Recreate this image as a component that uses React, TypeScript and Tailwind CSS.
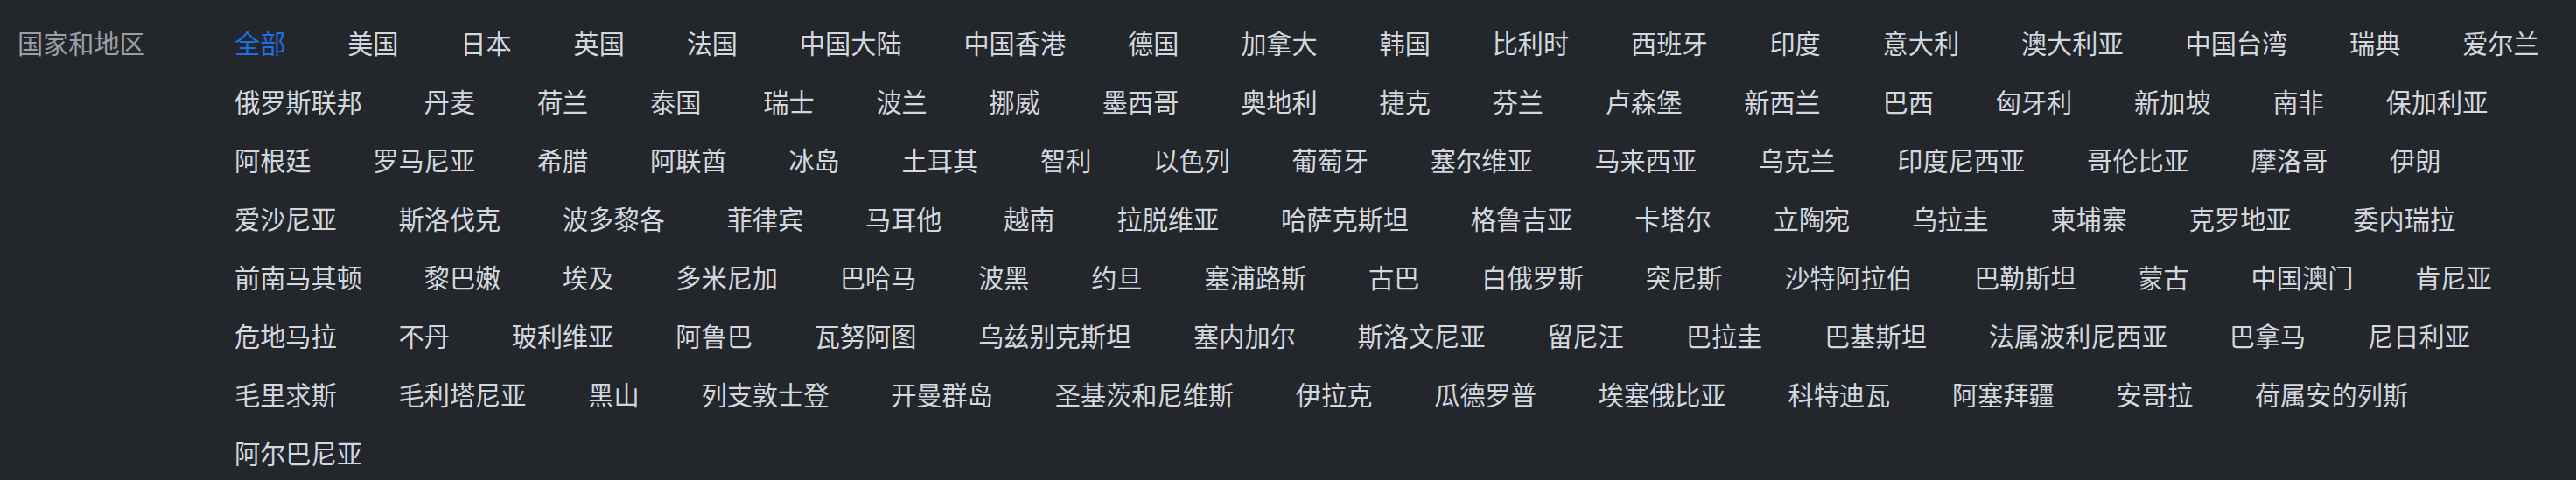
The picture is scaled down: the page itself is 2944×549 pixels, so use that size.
import React from "react";

const regions = [
  "全部", "美国", "日本", "英国", "法国", "中国大陆", "中国香港", "德国", "加拿大", "韩国", "比利时", "西班牙", "印度", "意大利", "澳大利亚", "中国台湾", "瑞典", "爱尔兰",
  "俄罗斯联邦", "丹麦", "荷兰", "泰国", "瑞士", "波兰", "挪威", "墨西哥", "奥地利", "捷克", "芬兰", "卢森堡", "新西兰", "巴西", "匈牙利", "新加坡", "南非", "保加利亚",
  "阿根廷", "罗马尼亚", "希腊", "阿联酋", "冰岛", "土耳其", "智利", "以色列", "葡萄牙", "塞尔维亚", "马来西亚", "乌克兰", "印度尼西亚", "哥伦比亚", "摩洛哥", "伊朗",
  "爱沙尼亚", "斯洛伐克", "波多黎各", "菲律宾", "马耳他", "越南", "拉脱维亚", "哈萨克斯坦", "格鲁吉亚", "卡塔尔", "立陶宛", "乌拉圭", "柬埔寨", "克罗地亚", "委内瑞拉",
  "前南马其顿", "黎巴嫩", "埃及", "多米尼加", "巴哈马", "波黑", "约旦", "塞浦路斯", "古巴", "白俄罗斯", "突尼斯", "沙特阿拉伯", "巴勒斯坦", "蒙古", "中国澳门", "肯尼亚",
  "危地马拉", "不丹", "玻利维亚", "阿鲁巴", "瓦努阿图", "乌兹别克斯坦", "塞内加尔", "斯洛文尼亚", "留尼汪", "巴拉圭", "巴基斯坦", "法属波利尼西亚", "巴拿马", "尼日利亚",
  "毛里求斯", "毛利塔尼亚", "黑山", "列支敦士登", "开曼群岛", "圣基茨和尼维斯", "伊拉克", "瓜德罗普", "埃塞俄比亚", "科特迪瓦", "阿塞拜疆", "安哥拉", "荷属安的列斯",
  "阿尔巴尼亚",
];

export default function App() {
  const [active, setActive] = React.useState("全部");
  return (
    <div
      className="min-h-[549px] w-full bg-[#23262b] pt-[15px]"
      style={{ fontFamily: '"Noto Sans CJK SC", "Noto Sans", sans-serif' }}
    >
      <div className="flex items-start">
        <div className="w-[268px] shrink-0 pl-[20px] text-[29.2px] leading-[67px] text-[#9a9ea6]">
          国家和地区
        </div>
        <ul className="flex flex-1 flex-wrap gap-x-[70.8px] pr-[20px]">
          {regions.map((name) => (
            <li key={name}>
              <button
                type="button"
                onClick={() => setActive(name)}
                className={
                  name === active
                    ? "cursor-pointer text-[29.2px] leading-[67px] text-[#1f6fe5]"
                    : "cursor-pointer text-[29.2px] leading-[67px] text-[#d3d7de] hover:text-[#1f6fe5]"
                }
              >
                {name}
              </button>
            </li>
          ))}
        </ul>
      </div>
    </div>
  );
}
